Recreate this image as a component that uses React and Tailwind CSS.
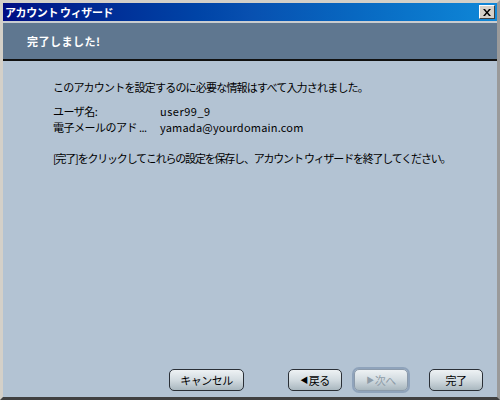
import React from 'react';

const font = { fontFamily: '"Noto Sans CJK JP", "Noto Sans", sans-serif' };

const WizButton = ({ children, className = '', disabled = false }) => (
  <div
    className={`h-[22px] rounded-[5px] border border-[#2a2f36] bg-gradient-to-b from-[#eef2f4] via-[#d2dbe0] to-[#a9b7bf] flex items-center justify-center text-[11px] tracking-[-0.5px] ${
      disabled ? 'text-[#8f9ca8] border-[#8b9aab] ring-2 ring-[#8fa3bb]' : 'text-black'
    } ${className}`}
  >
    {children}
  </div>
);

export default function App() {
  return (
    <div
      className="w-[500px] h-[400px] flex flex-col bg-[#b3c3d3] border-t-[3px] border-l-[3px] border-t-[#d4d0c8] border-l-[#d4d0c8] border-r-[3px] border-b-[3px] border-r-[#9a9a9a] border-b-[#404040] overflow-hidden"
      style={font}
    >
      {/* title bar */}
      <div className="h-[18px] flex items-center justify-between pl-[2px] pr-[2px] bg-gradient-to-r from-[#000c84] via-[#0850b0] to-[#1088d8]">
        <span className="text-white font-bold text-[11px] tracking-[-0.4px] leading-none">アカウント ウィザード</span>
        <div className="w-[16px] h-[14px] bg-[#d4d0c8] border border-t-white border-l-white border-r-[#404040] border-b-[#404040] flex items-center justify-center">
          <svg width="8" height="7" viewBox="0 0 8 7">
            <path d="M0 0h2l2 2.5L6 0h2L5 3.5 8 7H6L4 4.5 2 7H0l3-3.5z" fill="black" />
          </svg>
        </div>
      </div>
      <div className="h-[2px] bg-[#c8ccd0]" />

      {/* header */}
      <div className="h-[38px] bg-[#5f7790] flex items-center pl-[24px] border-b-2 border-[#111]">
        <span className="text-white font-bold text-[11px] tracking-[0.5px]">完了しました!</span>
      </div>

      {/* body */}
      <div className="flex-1 flex flex-col pl-[50px] pt-[18px] text-[11px] text-black whitespace-nowrap">
        <p className="leading-[16px] tracking-[-0.8px]">このアカウントを設定するのに必要な情報はすべて入力されました。</p>
        <div className="mt-[8px] grid grid-cols-[107px_1fr] leading-[16px]">
          <span className="tracking-[-0.5px]">ユーザ名:</span>
          <span className="tracking-[0.5px]">user99_9</span>
          <span className="tracking-[-0.5px]">電子メールのアド ...</span>
          <span className="tracking-[0.2px]">yamada@yourdomain.com</span>
        </div>
        <p className="mt-[15px] leading-[16px] tracking-[-1.2px]">
          [完了]をクリックしてこれらの設定を保存し、アカウント ウィザードを終了してください。
        </p>
      </div>

      {/* buttons */}
      <div className="flex items-center pl-[166px] pb-[6px]">
        <WizButton className="w-[75px]">キャンセル</WizButton>
        <WizButton className="w-[54px] ml-[44px]">
          <span className="text-[8px] mr-[1px]">◀</span>戻る
        </WizButton>
        <WizButton className="w-[54px] ml-[12px]" disabled>
          <span className="text-[8px] mr-[1px]">▶</span>次へ
        </WizButton>
        <WizButton className="w-[54px] ml-[21px]">完了</WizButton>
      </div>
    </div>
  );
}
